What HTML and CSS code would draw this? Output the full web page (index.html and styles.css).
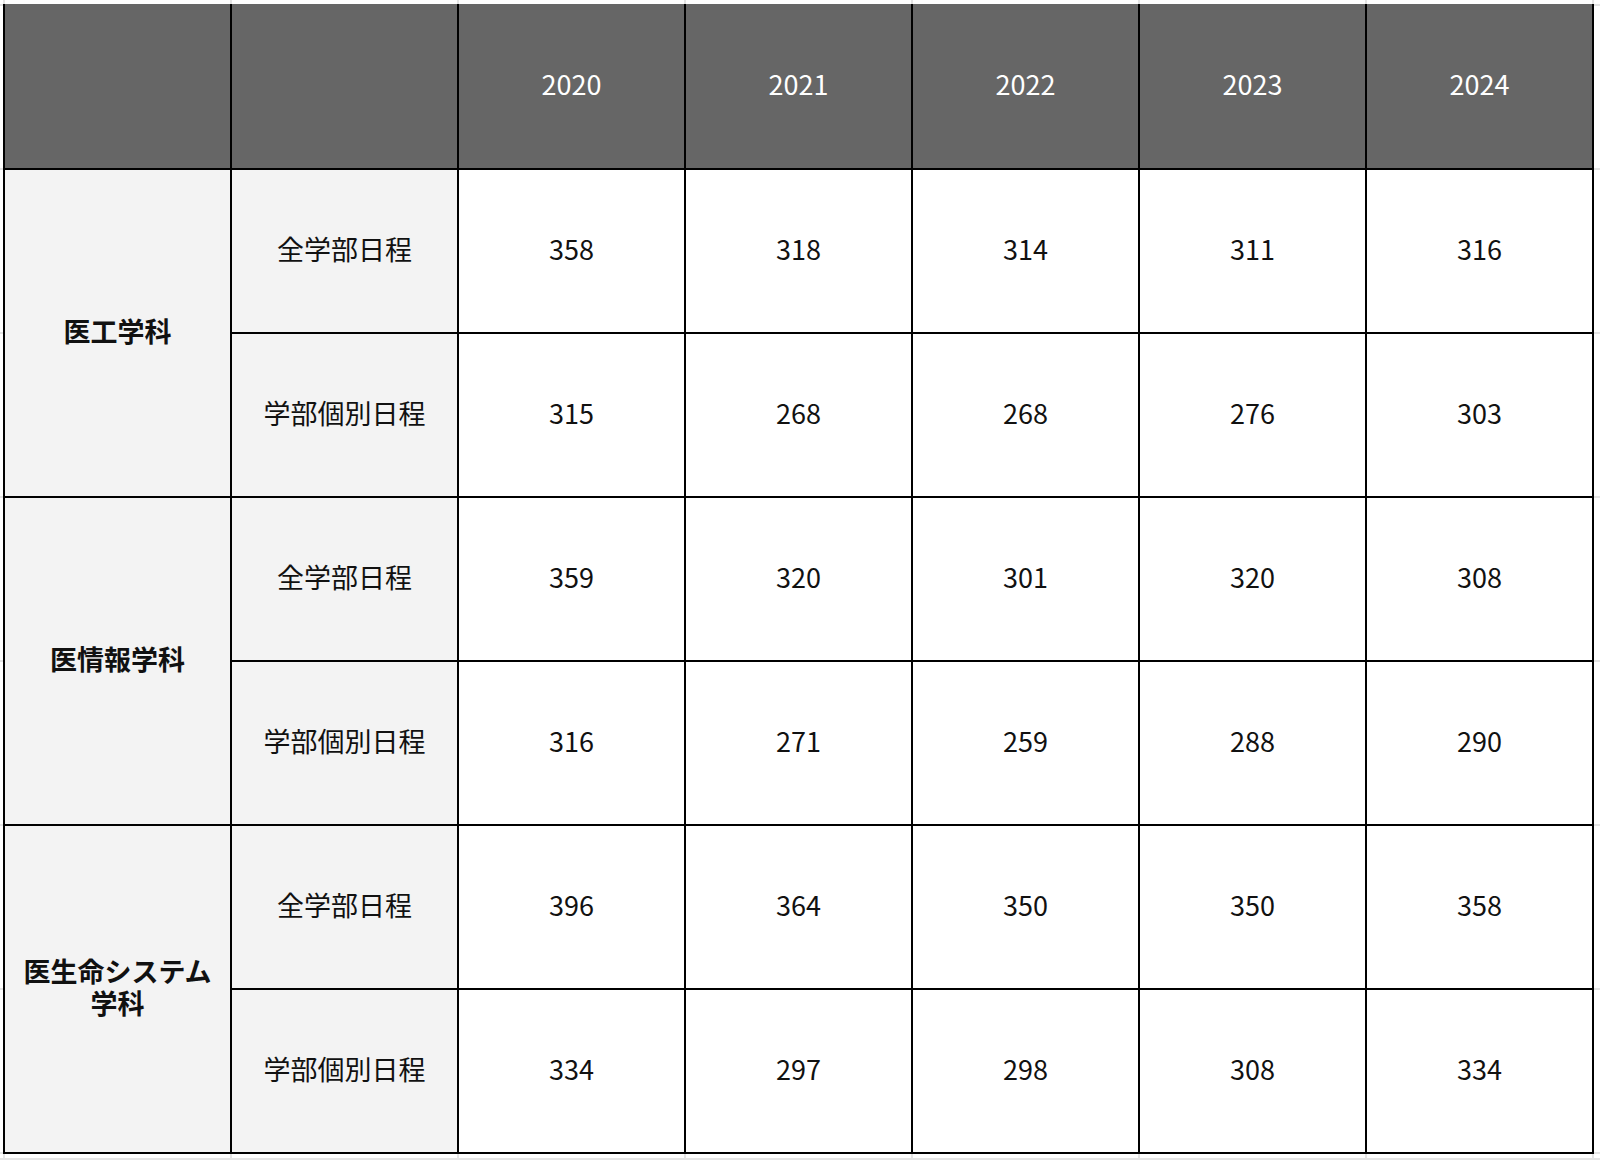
FILE: index.html
```html
<!DOCTYPE html>
<html lang="ja">
<head>
<meta charset="utf-8">
<title>入試データ</title>
<link rel="stylesheet" href="styles.css">
</head>
<body>
<table class="score-table">
  <thead>
    <tr>
      <th class="head-cell first"></th>
      <th class="head-cell"></th>
      <th class="head-cell">2020</th>
      <th class="head-cell">2021</th>
      <th class="head-cell">2022</th>
      <th class="head-cell">2023</th>
      <th class="head-cell">2024</th>
    </tr>
  </thead>
  <tbody>
    <tr>
      <th class="dept first" rowspan="2">医工学科</th>
      <th class="sched">全学部日程</th>
      <td>358</td><td>318</td><td>314</td><td>311</td><td>316</td>
    </tr>
    <tr>
      <th class="sched">学部個別日程</th>
      <td>315</td><td>268</td><td>268</td><td>276</td><td>303</td>
    </tr>
    <tr>
      <th class="dept first" rowspan="2">医情報学科</th>
      <th class="sched">全学部日程</th>
      <td>359</td><td>320</td><td>301</td><td>320</td><td>308</td>
    </tr>
    <tr>
      <th class="sched">学部個別日程</th>
      <td>316</td><td>271</td><td>259</td><td>288</td><td>290</td>
    </tr>
    <tr>
      <th class="dept first" rowspan="2">医生命システム学科</th>
      <th class="sched">全学部日程</th>
      <td>396</td><td>364</td><td>350</td><td>350</td><td>358</td>
    </tr>
    <tr>
      <th class="sched">学部個別日程</th>
      <td>334</td><td>297</td><td>298</td><td>308</td><td>334</td>
    </tr>
  </tbody>
</table>
</body>
</html>
```

FILE: styles.css
```css
html {
  background-color: #ffffff;
  background-image:
    repeating-linear-gradient(90deg, #e4e4e4 0 2px, transparent 2px 227px),
    repeating-linear-gradient(180deg, #e4e4e4 0 2px, transparent 2px 164px);
  background-position: 3px 0, 0 4px;
}

body {
  margin: 0;
  padding: 4px 0 0 3px;
  font-family: "Noto Sans CJK JP", "Noto Sans", sans-serif;
  color: #111111;
}

.score-table {
  border-collapse: separate;
  border-spacing: 0;
  table-layout: fixed;
  width: 1591px;
  font-size: 27px;
  line-height: 32px;
}

.score-table th,
.score-table td {
  box-sizing: border-box;
  border-right: 2px solid #000000;
  border-bottom: 2px solid #000000;
  text-align: center;
  vertical-align: middle;
  padding: 0 10px 4px;
  width: 227px;
}

.score-table .first {
  border-left: 2px solid #000000;
  width: 229px;
}

.score-table .head-cell {
  background: #666666;
  color: #ffffff;
  font-weight: 400;
  height: 166px;
}

.score-table tbody tr {
  height: 164px;
}

.score-table td {
  background: #ffffff;
  font-weight: 400;
}

.score-table .sched {
  background: #f3f3f3;
  font-weight: 400;
}

.score-table .dept {
  background: #f3f3f3;
  font-weight: 700;
  padding: 0 14px 4px;
}
```
